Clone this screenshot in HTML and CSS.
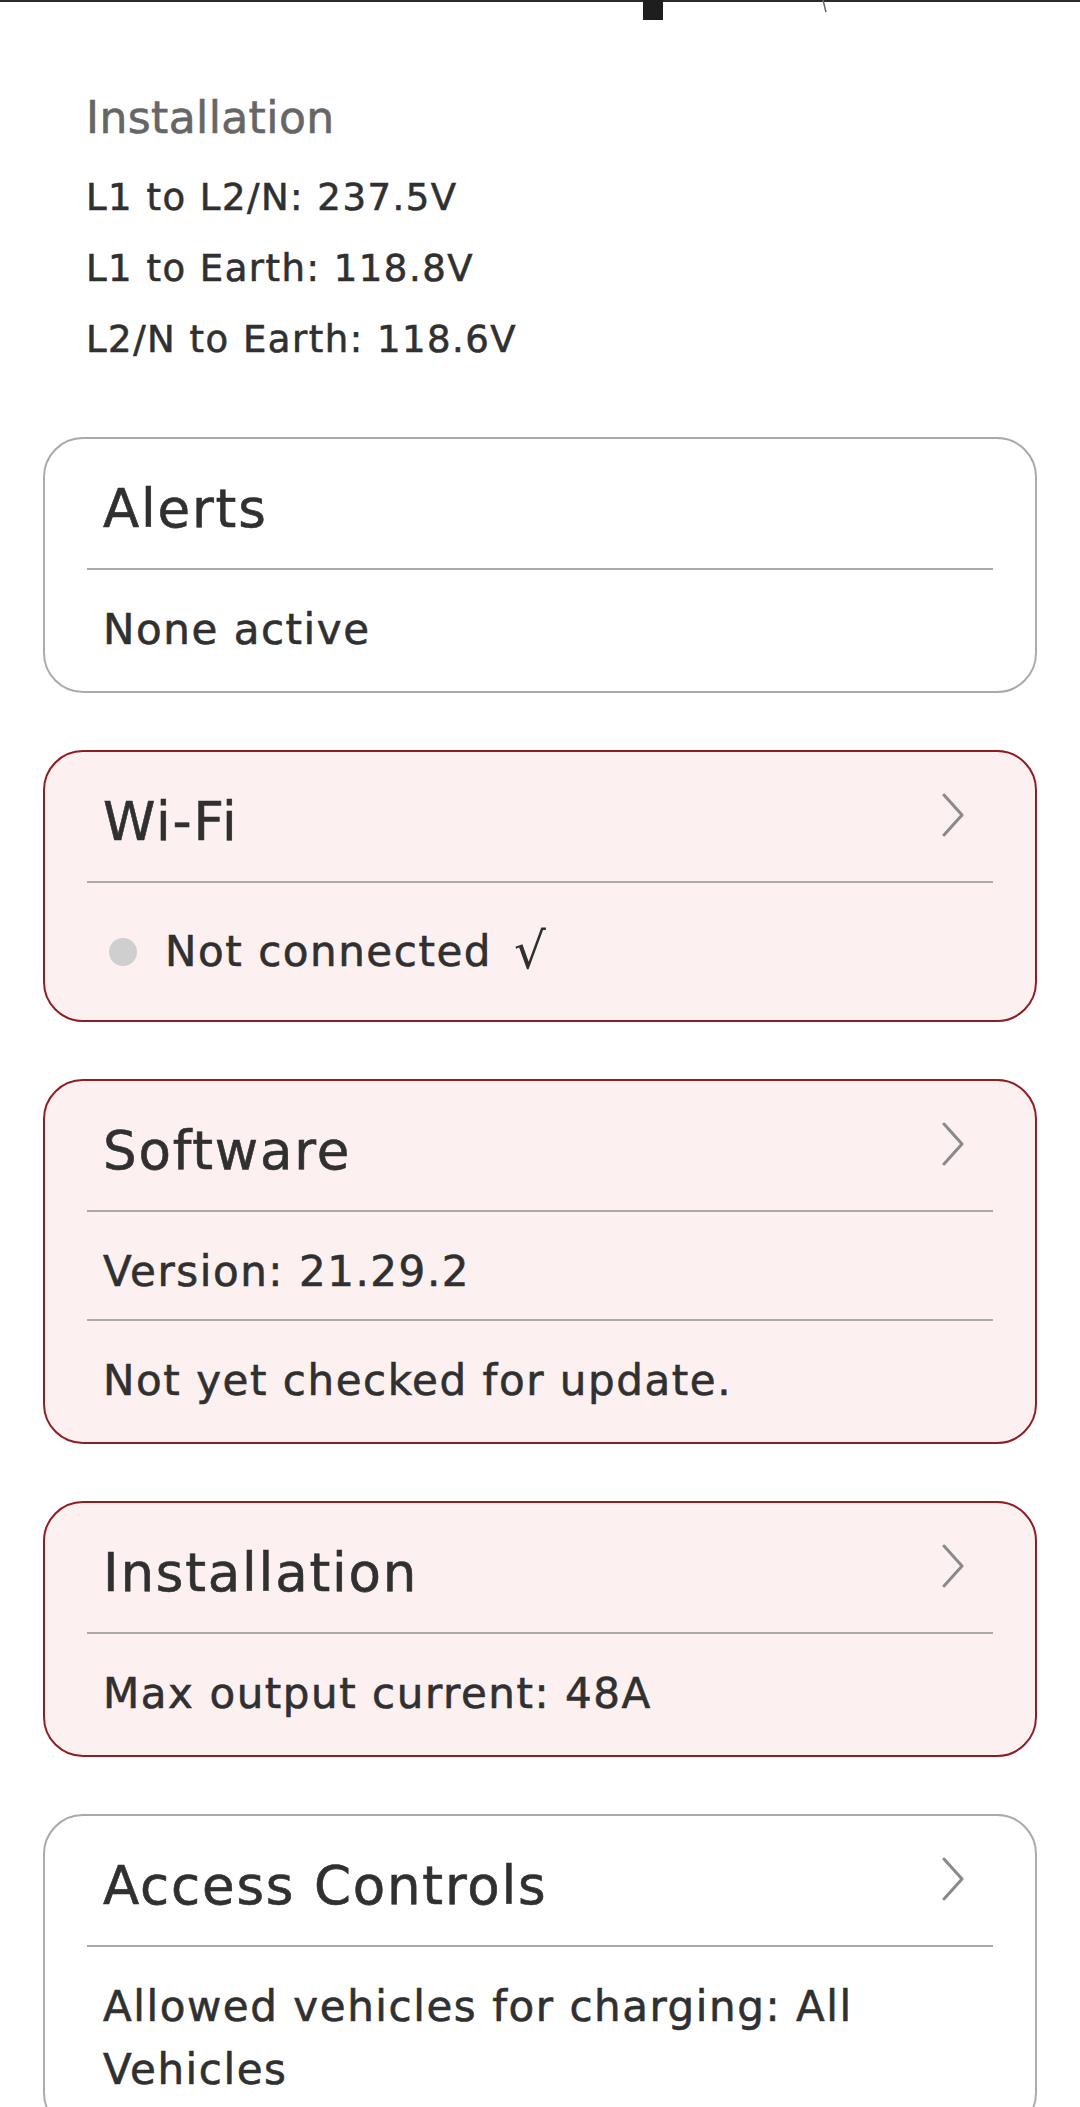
FILE: index.html
```html
<!DOCTYPE html>
<html lang="en">
<head>
    <meta charset="UTF-8">
    <meta name="viewport" content="width=device-width, initial-scale=1.0">
    <title>Wall Connector</title>
    <link rel="stylesheet" href="styles.css">
</head>
<body>
    <!-- bottom edge of the charger picture -->
    <div class="hero">
        <svg width="1080" height="22" viewBox="0 0 1080 22">
            <rect x="0" y="0" width="1080" height="2" fill="#2a2a2a"/>
            <rect x="643" y="0" width="20" height="20" fill="#1e1e1e"/>
            <path d="M823 0 L826 12" stroke="#666" stroke-width="1.5" fill="none"/>
        </svg>
    </div>

    <section class="summary">
        <h2 class="summary_title">Installation</h2>
        <p class="summary_line">L1 to L2/N: 237.5V</p>
        <p class="summary_line">L1 to Earth: 118.8V</p>
        <p class="summary_line">L2/N to Earth: 118.6V</p>
    </section>

    <div class="cards">
        <div class="card">
            <div class="card_head">
                <h3>Alerts</h3>
            </div>
            <div class="card_row">None active</div>
        </div>

        <div class="card card_warn">
            <div class="card_head">
                <h3>Wi-Fi</h3>
                <svg class="chevron" width="24" height="44" viewBox="0 0 24 44">
                    <path d="M3 2 L21 22 L3 42" />
                </svg>
            </div>
            <div class="card_row status_row">
                <span class="status_dot"></span>
                <span>Not connected</span>
                <span class="check">√</span>
            </div>
        </div>

        <div class="card card_warn">
            <div class="card_head">
                <h3>Software</h3>
                <svg class="chevron" width="24" height="44" viewBox="0 0 24 44">
                    <path d="M3 2 L21 22 L3 42" />
                </svg>
            </div>
            <div class="card_row">Version: 21.29.2</div>
            <div class="card_row">Not yet checked for update.</div>
        </div>

        <div class="card card_warn">
            <div class="card_head">
                <h3>Installation</h3>
                <svg class="chevron" width="24" height="44" viewBox="0 0 24 44">
                    <path d="M3 2 L21 22 L3 42" />
                </svg>
            </div>
            <div class="card_row">Max output current: 48A</div>
        </div>

        <div class="card">
            <div class="card_head">
                <h3>Access Controls</h3>
                <svg class="chevron" width="24" height="44" viewBox="0 0 24 44">
                    <path d="M3 2 L21 22 L3 42" />
                </svg>
            </div>
            <div class="card_row">Allowed vehicles for charging: All Vehicles</div>
        </div>
    </div>
</body>
</html>
```

FILE: styles.css
```css
body{
    margin: 0;
    font-family: "DejaVu Sans", "Open Sans", sans-serif;
    color: #303030;
    background: #fff;
    -webkit-text-stroke: 0.6px currentColor; /* closer to the medium weight */
}

.hero svg{
    display: block;
}

/* voltage readings at the top */
.summary{
    padding: 66px 0 0 86px;
}

.summary_title{
    margin: 0 0 14px;
    font-size: 44px;
    line-height: 60px;
    font-weight: normal;
    color: #666;
    letter-spacing: 0.4px;
}

.summary_line{
    margin: 0;
    font-size: 37px;
    line-height: 71px;
    letter-spacing: 1.5px;
}

.cards{
    display: flex;
    flex-direction: column;
    gap: 57px;
    padding: 62px 43px 40px;
}

.card{
    border: 2px solid #aaa;
    border-radius: 40px;
    padding: 0 42px 14px;
    background: #fff;
}

.card_warn{
    border-color: #8f1d22;
    background: #fcf0f0;
}

.card_head{
    display: flex;
    justify-content: space-between;
    align-items: center;
    padding: 38px 28px 27px 16px;
}

.card_head h3{
    margin: 0;
    font-size: 53px;
    line-height: 64px;
    font-weight: normal;
    letter-spacing: 1.8px;
}

.chevron{
    flex: none;
    margin-bottom: 14px;
}

.chevron path{
    fill: none;
    stroke: #8a8a8a;
    stroke-width: 3;
    stroke-linecap: round;
    stroke-linejoin: round;
}

.card_row{
    border-top: 2px solid #aaa;
    padding: 28px 16px 16px;
    font-size: 42px;
    line-height: 63px;
    letter-spacing: 1.55px;
}

.status_row{
    display: flex;
    align-items: center;
    padding-top: 37px;
    padding-bottom: 23px;
}

.status_dot{
    flex: none;
    width: 28px;
    height: 28px;
    border-radius: 50%;
    background: #cfcfcf;
    margin: 0 28px 0 6px;
}

.check{
    margin-left: 22px;
    font-size: 50px;
    -webkit-text-stroke: 0;
}
```
